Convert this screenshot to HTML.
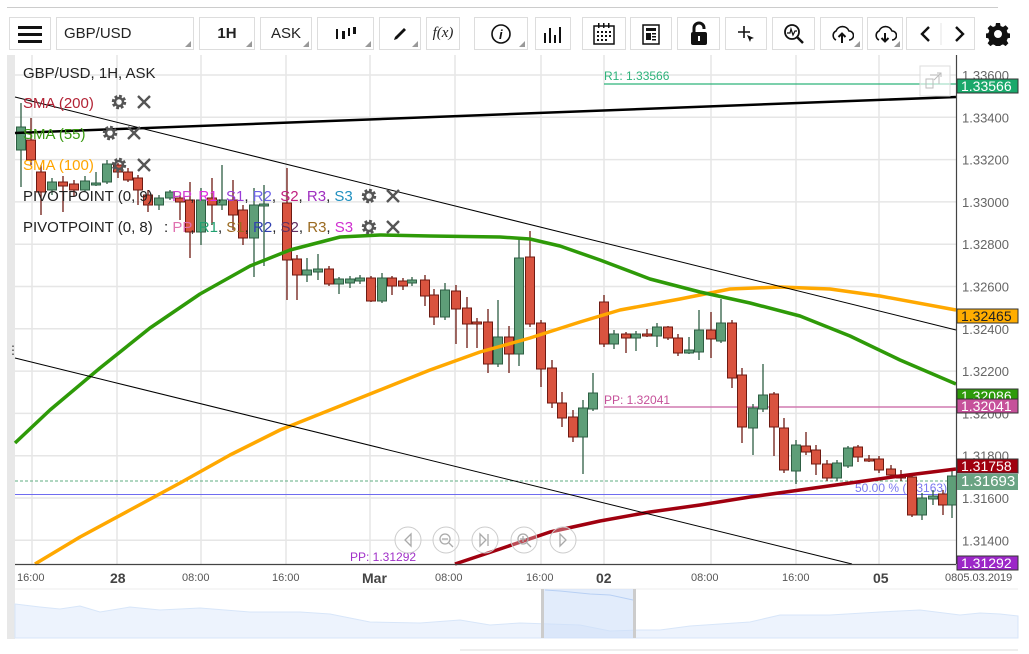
<!DOCTYPE html>
<html><head><meta charset="utf-8"><style>
body{margin:0;width:1029px;height:654px;overflow:hidden;background:#fff;font-family:"Liberation Sans",sans-serif;position:relative}
.tb{position:absolute;top:17px;height:33px;border:1px solid #ddd;box-sizing:border-box;background:#fff;display:flex;align-items:center;justify-content:center;font-size:15px;color:#222}
.tb .c{position:absolute;right:2px;bottom:2px;width:0;height:0;border-left:6px solid transparent;border-bottom:6px solid #999}
svg text{font-family:"Liberation Sans",sans-serif}
polyline{stroke-linejoin:round}
</style></head><body>
<div style="position:absolute;left:7px;top:7px;width:991px;height:1px;background:#ccc"></div>
<div class="tb" style="left:9px;width:42px"><svg width="24" height="18"><rect y="1" width="24" height="3" fill="#111"/><rect y="8" width="24" height="3" fill="#111"/><rect y="15" width="24" height="3" fill="#111"/></svg></div>
<div class="tb" style="left:56px;width:138px;justify-content:flex-start;padding-left:7px">GBP/USD<i class="c"></i></div>
<div class="tb" style="left:199px;width:56px;font-weight:bold">1H<i class="c"></i></div>
<div class="tb" style="left:260px;width:52px">ASK<i class="c"></i></div>
<div class="tb" style="left:317px;width:57px"><svg width="22" height="18"><g fill="#111"><rect x="1" y="4" width="2" height="10"/><rect x="7" y="6" width="3" height="8"/><rect x="13" y="3" width="2" height="8"/><rect x="18" y="2" width="3" height="7"/></g></svg><i class="c"></i></div>
<div class="tb" style="left:379px;width:42px"><svg width="18" height="18"><path d="M3 15 L4 12 L13 3 L15 5 L6 14 Z" fill="#111"/></svg><i class="c"></i></div>
<div class="tb" style="left:426px;width:34px;font-family:'Liberation Serif',serif;font-style:italic">f(x)</div>
<div class="tb" style="left:474px;width:54px"><svg width="22" height="22"><circle cx="11" cy="11" r="9" fill="none" stroke="#111" stroke-width="1.6"/><text x="9" y="16" font-family="Liberation Serif" font-style="italic" font-weight="bold" font-size="13" fill="#111">i</text></svg><i class="c"></i></div>
<div class="tb" style="left:535px;width:36px"><svg width="22" height="18"><g fill="#111"><rect x="2" y="8" width="2" height="10"/><rect x="7" y="3" width="2" height="15"/><rect x="12" y="10" width="2" height="8"/><rect x="17" y="2" width="2" height="16"/></g></svg></div>
<div class="tb" style="left:582px;width:44px"><svg width="24" height="24"><rect x="2" y="4" width="20" height="18" fill="none" stroke="#111" stroke-width="1.5"/><g fill="#111"><rect x="6" y="1" width="1.5" height="5"/><rect x="11" y="1" width="1.5" height="5"/><rect x="16" y="1" width="1.5" height="5"/><rect x="5" y="9" width="2" height="2"/><rect x="9" y="9" width="2" height="2"/><rect x="13" y="9" width="2" height="2"/><rect x="17" y="9" width="2" height="2"/><rect x="5" y="13" width="2" height="2"/><rect x="9" y="13" width="2" height="2"/><rect x="13" y="13" width="2" height="2"/><rect x="17" y="13" width="2" height="2"/><rect x="5" y="17" width="2" height="2"/><rect x="9" y="17" width="2" height="2"/><rect x="13" y="17" width="2" height="2"/></g></svg></div>
<div class="tb" style="left:630px;width:42px"><svg width="20" height="22"><rect x="2" y="2" width="16" height="19" fill="none" stroke="#111" stroke-width="1.5"/><rect x="5" y="5" width="10" height="3" fill="#111"/><rect x="5" y="10" width="5" height="7" fill="#111"/><rect x="11" y="10" width="4" height="1.5" fill="#111"/><rect x="11" y="13" width="4" height="1.5" fill="#111"/><rect x="11" y="16" width="4" height="1.5" fill="#111"/></svg></div>
<div class="tb" style="left:677px;width:43px"><svg width="20" height="26"><path d="M5 11 V7 A5 5 0 0 1 15 7 V8" fill="none" stroke="#111" stroke-width="3"/><rect x="2" y="11" width="16" height="13" rx="2" fill="#111"/><rect x="9" y="15" width="2" height="5" fill="#fff"/></svg></div>
<div class="tb" style="left:725px;width:42px"><svg width="20" height="20"><path d="M2 8H14M8 2V14" stroke="#111" stroke-width="1.6"/><path d="M11 11 L18 14 L15 15 L14 18 Z" fill="#111"/></svg></div>
<div class="tb" style="left:772px;width:43px"><svg width="22" height="22"><circle cx="9" cy="9" r="7" fill="none" stroke="#111" stroke-width="1.8"/><path d="M14 14 L20 20" stroke="#111" stroke-width="2.5"/><path d="M4 10 L7 10 L8 6 L10 12 L12 8 L14 8" fill="none" stroke="#111" stroke-width="1.2"/></svg></div>
<div class="tb" style="left:820px;width:43px"><svg width="24" height="20"><path d="M6 16 A5 5 0 0 1 6 7 A7 7 0 0 1 19 7 A4.5 4.5 0 0 1 19 16" fill="none" stroke="#111" stroke-width="1.6"/><path d="M12 19 V10 M8.5 13 L12 9.5 L15.5 13" fill="none" stroke="#111" stroke-width="2"/></svg><i class="c"></i></div>
<div class="tb" style="left:867px;width:36px"><svg width="24" height="20"><path d="M6 16 A5 5 0 0 1 6 7 A7 7 0 0 1 19 7 A4.5 4.5 0 0 1 19 16" fill="none" stroke="#111" stroke-width="1.6"/><path d="M12 9 V18 M8.5 14 L12 17.5 L15.5 14" fill="none" stroke="#111" stroke-width="2"/></svg><i class="c"></i></div>
<div class="tb" style="left:906px;width:69px"><svg width="69" height="22"><path d="M22 4 L15 11 L22 18" fill="none" stroke="#111" stroke-width="2.4"/><path d="M49 4 L56 11 L49 18" fill="none" stroke="#111" stroke-width="2.4"/><path d="M34 0V33" stroke="#e6e6e6"/></svg></div>
<div style="position:absolute;left:986px;top:22px"><svg width="24" height="24" viewBox="0 0 24 24"><path fill="#111" d="M12 8a4 4 0 1 0 0 8a4 4 0 1 0 0-8zM10 1h4l.6 3 2.4 1 2.6-1.7 2.8 2.8-1.7 2.6 1 2.4 3 .6v4l-3 .6-1 2.4 1.7 2.6-2.8 2.8-2.6-1.7-2.4 1-.6 3h-4l-.6-3-2.4-1-2.6 1.7-2.8-2.8 1.7-2.6-1-2.4-3-.6v-4l3-.6 1-2.4-1.7-2.6 2.8-2.8 2.6 1.7 2.4-1z" fill-rule="evenodd"/></svg></div>

<svg id="ch" width="1029" height="654" style="position:absolute;left:0;top:0">
<rect x="7" y="55" width="8" height="584" fill="#e8e8e8"/>
<text x="7" y="354" font-size="12" fill="#333">⋮</text>
<g id="grid" stroke="#e6e6e6" stroke-width="1.5"></g>
<line x1="15" y1="481" x2="956" y2="481" stroke="#5fae82" stroke-dasharray="3,2"/>
<line x1="15" y1="494.5" x2="956" y2="494.5" stroke="#6f6cf0"/>
<line x1="604" y1="84" x2="956" y2="84" stroke="#2db37a" stroke-width="1.2"/>
<line x1="604" y1="407" x2="956" y2="407" stroke="#d07ab0" stroke-width="1.5"/>
<text x="604" y="80" font-size="12" fill="#2db37a">R1: 1.33566</text>
<text x="604" y="404" font-size="12" fill="#c6519a">PP: 1.32041</text>
<text x="855" y="492" font-size="12" fill="#7a78f0">50.00 % (1.3163)</text>
<text x="350" y="561" font-size="12" fill="#a030c8">PP: 1.31292</text>
<g id="cd"></g>
<polyline fill="none" stroke="#ffa800" stroke-width="3.5" points="35,564 80,537 130,510 180,483 230,455 280,430 330,410 380,390 430,370 480,352 530,338 580,322 620,310 680,299 730,289 780,287 830,289 880,296 956,310"/>
<polyline fill="none" stroke="#2e9a08" stroke-width="3.5" points="15,443 50,410 100,368 150,328 200,294 250,266 290,250 340,237 380,235 430,236 500,237 530,239 560,246 600,260 650,279 700,292 750,303 800,316 850,336 900,360 956,384"/>
<polyline fill="none" stroke="#a0000f" stroke-width="3.5" points="455,564 500,549 550,532 600,521 650,512 700,505 750,497 800,490 850,483 900,476 956,469"/>
<line x1="15" y1="133" x2="956" y2="97" stroke="#000" stroke-width="2.5"/>
<line x1="15" y1="97" x2="956" y2="330" stroke="#000" stroke-width="1"/>
<line x1="15" y1="358" x2="852" y2="564" stroke="#000" stroke-width="1"/>
<rect x="920" y="66" width="30" height="30" fill="#fff" fill-opacity=".6" stroke="#ddd"/>
<path d="M926 79h7v9h-7z M930 75h9v9" fill="none" stroke="#bbb"/>
<path d="M934 80l7-7M937 73h4v4" fill="none" stroke="#bbb"/>
<g font-size="15">
<text x="23" y="78" fill="#222">GBP/USD, 1H, ASK</text>
<text x="23" y="108" fill="#b22234">SMA (200)</text>
<text x="23" y="139" fill="#3a9a12">SMA (55)</text>
<text x="23" y="170" fill="#ffa500">SMA (100)</text>
<text x="23" y="201" fill="#222">PIVOTPOINT (0, 9)</text>
<text x="172" y="201"><tspan fill="#d23fd0">PP</tspan><tspan fill="#222">, </tspan><tspan fill="#e030e0">R1</tspan><tspan fill="#222">, </tspan><tspan fill="#9a3cd8">S1</tspan><tspan fill="#222">, </tspan><tspan fill="#6d64e8">R2</tspan><tspan fill="#222">, </tspan><tspan fill="#c02080">S2</tspan><tspan fill="#222">, </tspan><tspan fill="#a030c0">R3</tspan><tspan fill="#222">, </tspan><tspan fill="#2090c0">S3</tspan></text>
<text x="23" y="232" fill="#222">PIVOTPOINT (0, 8)</text>
<text x="164" y="232"><tspan fill="#222">: </tspan><tspan fill="#e070b0">PP</tspan><tspan fill="#222">, </tspan><tspan fill="#20a070">R1</tspan><tspan fill="#222">, </tspan><tspan fill="#9a6a20">S1</tspan><tspan fill="#222">, </tspan><tspan fill="#3040b0">R2</tspan><tspan fill="#222">, </tspan><tspan fill="#603060">S2</tspan><tspan fill="#222">, </tspan><tspan fill="#9a6a20">R3</tspan><tspan fill="#222">, </tspan><tspan fill="#d030d0">S3</tspan></text>
</g>
<g id="icons"></g>
<g fill="#fff" fill-opacity=".3" stroke="#ccc">
<circle cx="408" cy="540" r="13"/><circle cx="446" cy="540" r="13"/><circle cx="485" cy="540" r="13"/><circle cx="524" cy="540" r="13"/><circle cx="563" cy="540" r="13"/></g>
<g fill="none" stroke="#aaa" stroke-width="1.3">
<path d="M411 534l-6 6 6 6z"/><circle cx="445" cy="539" r="5"/><path d="M442 539h6M449 543l4 4"/>
<path d="M480 534l6 6-6 6zM488 534v12"/><circle cx="523" cy="539" r="5"/><path d="M520 539h6M523 536v6M527 543l4 4"/><path d="M560 534l6 6-6 6z"/></g>
<line x1="956.5" y1="55" x2="956.5" y2="564" stroke="#444" stroke-width="1.2"/>
<line x1="15" y1="564.5" x2="956" y2="564.5" stroke="#444" stroke-width="1.2"/>
<g id="ax" font-size="13" fill="#666"></g>
<g id="tags" font-size="13"></g>
<g font-size="11" fill="#555">
<text x="17" y="581">16:00</text><text x="110" y="583" font-size="14" font-weight="bold" fill="#444">28</text>
<text x="182" y="581">08:00</text><text x="272" y="581">16:00</text><text x="362" y="583" font-size="14" font-weight="bold" fill="#444">Mar</text>
<text x="435" y="581">08:00</text><text x="526" y="581">16:00</text><text x="596" y="583" font-size="14" font-weight="bold" fill="#444">02</text>
<text x="691" y="581">08:00</text><text x="782" y="581">16:00</text><text x="873" y="583" font-size="14" font-weight="bold" fill="#444">05</text>
<text x="945" y="581">0805.03.2019</text></g>
<line x1="15" y1="589" x2="1018" y2="589" stroke="#eee"/>
<path d="M15 604 L40 607 L60 609 L80 606 L100 612 L130 607 L160 610 L200 608 L250 612 L300 612 L330 614 L370 622 L420 623 L460 620 L490 625 L520 623 L550 624 L580 625 L610 631 L640 630 L660 630 L690 626 L720 624 L750 622 L780 615 L810 615 L830 615 L880 612 L920 610 L960 615 L980 613 L1000 614 L1018 616 L1018 638 L15 638 Z" fill="#edf3fd" stroke="#d8e6f9"/>
<rect x="543" y="589" width="91" height="49" fill="#cfdff8" fill-opacity=".6"/>
<rect x="541" y="589" width="3" height="49" fill="#ccc"/><rect x="633" y="589" width="3" height="49" fill="#ccc"/>
<path d="M545 590 L560 591 L590 594 L610 595 L633 600" fill="none" stroke="#b8d0f4"/>
<line x1="460" y1="650" x2="1018" y2="650" stroke="#ddd"/>
</svg>
<script>
const S='http://www.w3.org/2000/svg';
function el(p,t,a){const e=document.createElementNS(S,t);for(const k in a)e.setAttribute(k,a[k]);p.appendChild(e);return e}
const g=document.getElementById('grid');
for(let k=0;k<12;k++){const y=75+42.3*k;el(g,'line',{x1:15,x2:956,y1:y,y2:y})}
[32,117,201,286,370,455,541,604,711,796,879].forEach(x=>el(g,'line',{x1:x,x2:x,y1:55,y2:564}));
const ax=document.getElementById('ax');
['1.33600','1.33400','1.33200','1.33000','1.32800','1.32600','1.32400','1.32200','1.32000','1.31800','1.31600','1.31400'].forEach((t,k)=>{const e=el(ax,'text',{x:962,y:80+42.3*k});e.textContent=t});
const tg=document.getElementById('tags');
[[79,'#1aa86b','1.33566','#fff'],[309,'#ffad00','1.32465','#222'],[389,'#2d9a0a','1.32086','#fff'],[399,'#c6519a','1.32041','#fff'],[459,'#a0000f','1.31758','#fff'],[474,'#6aa383','1.31693','#fff'],[556,'#9c27c8','1.31292','#fff']].forEach(a=>{el(tg,'rect',{x:957,y:a[0],width:61,height:a[0]==474?16:14,fill:a[1],stroke:'#333','stroke-width':a[0]==474?0:1});const e=el(tg,'text',{x:961,y:a[0]+12,fill:a[3],'font-size':a[0]==474?15:14});e.textContent=a[2]});
const C=[[21,150,127,103,187],[31,140,160,118,165],[41,172,192,165,215],[52,190,182,178,195],[63,182,186,176,212],[74,184,190,180,196],[85,190,181,176,192],[96,184,183,172,186],[107,182,164,160,184],[118,165,172,163,178],[128,172,180,168,182],[138,178,190,175,205],[148,195,205,190,212],[159,205,198,195,210],[170,198,192,190,200],[180,198,202,195,220],[190,200,232,182,258],[201,232,200,188,245],[212,198,205,178,225],[222,205,200,165,210],[233,200,215,180,230],[243,210,238,205,245],[254,238,205,188,277],[264,205,204,185,266],[287,203,260,168,300],
[297,259,275,255,300],[307,275,270,258,282],[318,272,269,254,280],[329,269,284,266,286],[339,284,279,277,294],[350,283,279,276,288],[360,281,278,275,284],[371,278,301,276,302],[382,301,278,273,303],[392,278,286,276,295],[403,281,286,278,290],[412,283,280,277,286],[425,280,296,275,306],[434,295,317,289,325],[445,317,290,283,320],[456,291,309,285,344],[467,308,324,297,348],[477,322,323,318,348],[488,322,364,309,373],[498,364,337,300,367],[509,337,354,326,373],[519,354,258,239,366],[530,257,324,231,327],[541,323,369,320,387],[552,368,403,360,408],[562,403,418,392,427],[573,417,437,410,442],[583,437,408,400,474],[593,409,393,373,411],
[604,302,344,295,347],[614,344,334,330,349],[626,334,338,332,353],[636,338,334,331,351],[647,334,335,329,337],[657,336,327,323,347],[668,327,338,326,340],[678,338,353,334,356],[689,353,350,337,354],[699,352,330,310,360],[711,330,339,312,358],[721,341,323,299,343],[732,323,378,320,388],[742,375,427,368,443],[753,428,408,404,455],[763,409,395,364,412],[774,394,427,392,456],[784,428,470,418,473],[796,471,445,440,484],[806,446,452,432,455],[816,450,464,445,475],[827,464,478,460,481],[837,478,463,460,481],[848,466,448,446,468],[858,447,457,445,462],[869,459,460,455,462],[879,459,470,456,473],[891,469,475,465,478],[901,475,478,470,481],[912,477,515,474,517],[922,515,498,493,520],[933,499,496,490,505],[943,494,505,490,515],[952,505,476,470,518]];
const cd=document.getElementById('cd');
C.forEach(c=>{const up=c[2]<c[1];const col=up?'#2e5e43':'#6e1a12';const fill=up?'#5e9e78':'#d9533f';el(cd,'line',{x1:c[0],x2:c[0],y1:c[3],y2:c[4],stroke:col,'stroke-width':1.3});const t=Math.min(c[1],c[2]),h=Math.max(2,Math.abs(c[1]-c[2]));el(cd,'rect',{x:c[0]-4.5,y:t,width:9,height:h,fill:fill,stroke:col,'stroke-width':1})});
const ic=document.getElementById('icons');
function gear(x,y){el(ic,'circle',{cx:x,cy:y,r:5.5,fill:'none',stroke:'#555','stroke-width':3.5,'stroke-dasharray':'2.6,1.7'});el(ic,'circle',{cx:x,cy:y,r:4,fill:'none',stroke:'#555','stroke-width':2.5})}
function xx(x,y){el(ic,'path',{d:`M${x-6} ${y-6}L${x+6} ${y+6}M${x+6} ${y-6}L${x-6} ${y+6}`,stroke:'#555','stroke-width':2.4})}
[[119,102,144],[110,133,134],[119,165,144],[369,196,393],[369,227,393]].forEach(a=>{gear(a[0],a[1]);xx(a[2],a[1])});
</script>
</body></html>
